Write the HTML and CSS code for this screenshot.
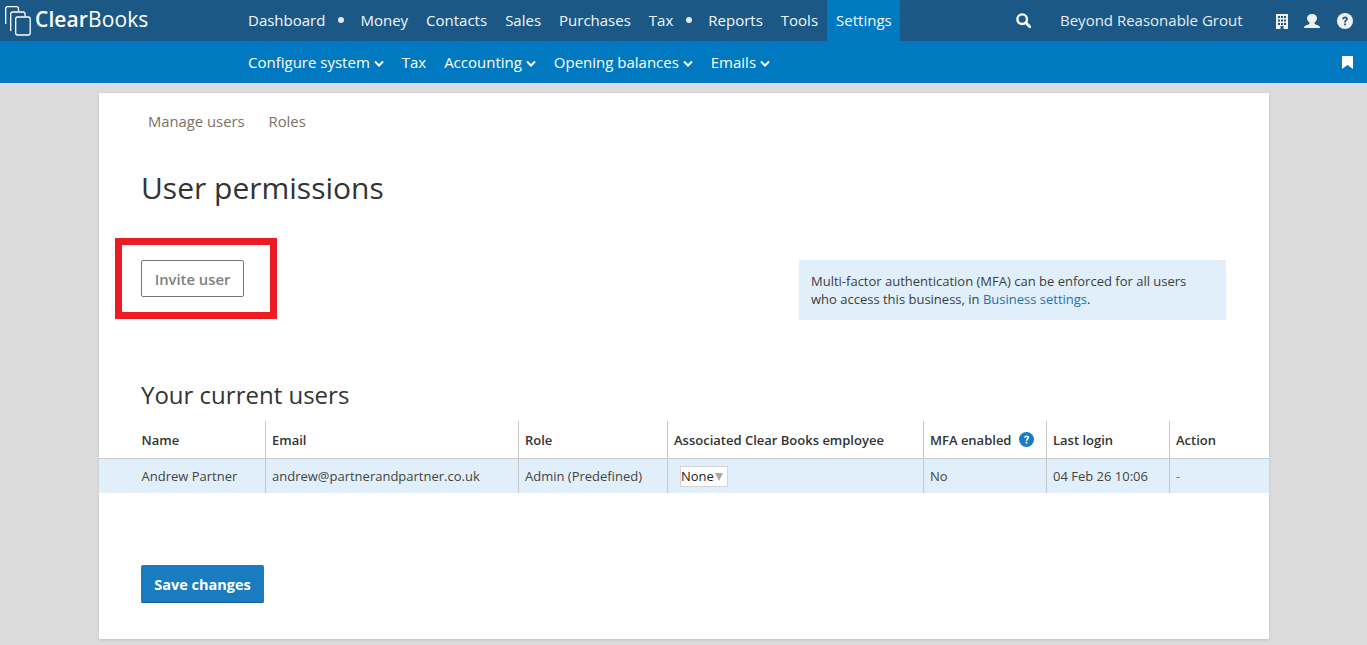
FILE: index.html
```html
<!DOCTYPE html>
<html lang="en">
<head>
<meta charset="utf-8">
<title>User permissions</title>
<link rel="stylesheet" href="styles.css">
</head>
<body>
<header class="topbar">
  <a class="logo">
    <svg class="logo-icon" width="26" height="30" viewBox="0 0 26 30" fill="none" stroke="#fff" stroke-width="1.300">
      <path d="M13.500 5.500V2.700a2 2 0 0 0-2-2H2.700a2 2 0 0 0-2 2V18"/>
      <path d="M20 10.500V8a2 2 0 0 0-2-2H7.700a2 2 0 0 0-2 2V25"/>
      <rect x="10.700" y="11" width="14.500" height="18" rx="2" fill="#1b5885"/>
    </svg>
    <span class="logo-text"><b>Clear</b>Books</span>
  </a>
  <nav class="mainnav">
    <a>Dashboard</a><i class="dot"></i><a>Money</a><a>Contacts</a><a>Sales</a><a>Purchases</a><a>Tax</a><i class="dot"></i><a>Reports</a><a>Tools</a><a class="active">Settings</a>
  </nav>
  <div class="topright">
    <svg class="ico-search" width="15" height="15" viewBox="0 0 15 15" fill="none" stroke="#fff"><circle cx="6.200" cy="6.200" r="4.800" stroke-width="2.400"/><path d="M9.800 9.800l4 4" stroke-width="2.800" stroke-linecap="round"/></svg>
    <span class="company">Beyond Reasonable Grout</span>
    <svg class="ico-building" width="12" height="15" viewBox="0 0 12 15"><path fill="#f0f0f0" fill-rule="evenodd" d="M0 0h12v15H7.500v-3h-3v3H0zM2 2v2h2V2zm3 0v2h2V2zm3 0v2h2V2zM2 5.500v2h2v-2zm3 0v2h2v-2zm3 0v2h2v-2zM2 9v2h2V9zm6 0v2h2V9zM5 9v2h2V9z"/></svg>
    <svg class="ico-user" width="16" height="14" viewBox="0 0 16 14"><path fill="#f0f0f0" d="M8 0c3 0 5 1.900 5 4.300 0 1.800-1.100 3.300-2.500 4.100v1c0 .6 1 1 2.700 1.700 1.500.5 2.800 1 2.800 2.900H0c0-1.900 1.300-2.400 2.800-2.900 1.700-.7 2.700-1.100 2.700-1.700v-1C4.100 7.600 3 6.100 3 4.300 3 1.900 5 0 8 0z"/></svg>
    <svg class="ico-help" width="16" height="16" viewBox="0 0 16 16"><circle cx="8" cy="8" r="8" fill="#f0f0f0"/><path d="M5.200 6.200c0-1.600 1.200-2.600 2.900-2.600s2.800 1 2.800 2.300c0 1.900-2.100 1.900-2.100 3.500H7.100c0-2.300 1.900-2.400 1.900-3.400 0-.5-.4-.8-1-.8-.6 0-1 .4-1.100 1z" fill="#1b5885"/><rect x="7.100" y="10.500" width="1.800" height="1.800" fill="#1b5885"/></svg>
  </div>
</header>
<div class="subbar">
  <nav class="subnav">
    <a>Configure system <svg class="chev" width="10" height="7" viewBox="0 0 10 7"><path d="M1 1.500l4 4 4-4" fill="none" stroke="#fff" stroke-width="2"/></svg></a>
    <a>Tax</a>
    <a>Accounting <svg class="chev" width="10" height="7" viewBox="0 0 10 7"><path d="M1 1.500l4 4 4-4" fill="none" stroke="#fff" stroke-width="2"/></svg></a>
    <a>Opening balances <svg class="chev" width="10" height="7" viewBox="0 0 10 7"><path d="M1 1.500l4 4 4-4" fill="none" stroke="#fff" stroke-width="2"/></svg></a>
    <a>Emails <svg class="chev" width="10" height="7" viewBox="0 0 10 7"><path d="M1 1.500l4 4 4-4" fill="none" stroke="#fff" stroke-width="2"/></svg></a>
  </nav>
  <svg class="ico-bookmark" width="11" height="13" viewBox="0 0 11 13"><path fill="#fff" d="M0 0h11v13L5.500 9 0 13z"/></svg>
</div>
<main class="card">
  <div class="tabs"><a>Manage users</a><a>Roles</a></div>
  <h1>User permissions</h1>
  <div class="actions">
    <button class="btn-outline" type="button">Invite user</button>
    <div class="notice">Multi-factor authentication (MFA) can be enforced for all users who access this business, in <a>Business settings</a>.</div>
  </div>
  <h2>Your current users</h2>
  <div class="table">
    <div class="row head">
      <div class="cell first">Name</div><div class="cell">Email</div><div class="cell">Role</div><div class="cell">Associated Clear Books employee</div>
      <div class="cell">MFA enabled <svg class="q" width="15" height="15" viewBox="0 0 16 16"><circle cx="8" cy="8" r="8" fill="#1a7cc0"/><path d="M5.200 6.200c0-1.600 1.200-2.600 2.900-2.600s2.800 1 2.800 2.300c0 1.900-2.100 1.900-2.100 3.500H7.100c0-2.300 1.900-2.400 1.900-3.400 0-.5-.4-.8-1-.8-.6 0-1 .4-1.100 1z" fill="#fff"/><rect x="7.100" y="10.500" width="1.800" height="1.800" fill="#fff"/></svg></div>
      <div class="cell">Last login</div><div class="cell">Action</div>
    </div>
    <div class="row body">
      <div class="cell first">Andrew Partner</div><div class="cell">andrew@partnerandpartner.co.uk</div><div class="cell">Admin (Predefined)</div>
      <div class="cell"><span class="select">None<i class="arrow"></i></span></div>
      <div class="cell">No</div><div class="cell">04 Feb 26 10:06</div><div class="cell muted">-</div>
    </div>
  </div>
  <button class="btn-primary" type="button">Save changes</button>
</main>
<div class="highlight"></div>
</body>
</html>
```
FILE: styles.css
```css
* { box-sizing: border-box; }
html, body { margin: 0; height: 645px; overflow: hidden; }
body { background: #dcdcdc; font-family: "Open Sans", sans-serif; color: #3a3a3a; font-size: 13px; }
a { text-decoration: none; }

.topbar { height: 41px; background: #1b5885; display: flex; align-items: stretch; color: #f4f7fa; position: relative; }
.logo { width: 248px; display: flex; align-items: flex-start; flex: none; color: #fff; }
.logo-icon { margin: 6px 0 0 5px; flex: none; }
.logo-text { font-size: 21px; line-height: 41px; margin-left: 4px; margin-top: -1px; letter-spacing: 0.1px; }
.logo-text b { font-weight: 600; }
.mainnav { display: flex; align-items: stretch; font-size: 15px; }
.mainnav a { display: flex; align-items: center; margin-right: 18px; padding-bottom: 1px; }
.mainnav a.active { background: #0079c1; margin-left: -9px; margin-right: 0; padding: 0 8px 1px 9px; }
.dot { width: 6px; height: 6px; border-radius: 50%; background: #e8e8e8; align-self: center; margin: -2px 16px 0 -5px; }
.topright { position: absolute; left: 1016px; top: 0; height: 41px; display: flex; align-items: center; }
.ico-search { margin-right: 29px; }
.company { font-size: 15px; margin-right: 33px; padding-bottom: 1px; color: #e6edf2; }
.ico-building { margin: 1px 16px 0 0; }
.ico-user { margin: 1px 17px 0 0; }

.subbar { height: 42px; background: #0079c1; display: flex; align-items: center; padding-left: 248px; position: relative; }
.subnav { display: flex; font-size: 15px; color: #fff; }
.subnav a { margin-right: 18px; display: flex; align-items: center; white-space: pre; }
.chev { margin-top: 3px; }
.ico-bookmark { position: absolute; left: 1342px; top: 15px; }

.card { margin: 10px 0 0 99px; width: 1170px; height: 546px; background: #fff; box-shadow: 0 1px 3px rgba(0,0,0,.12); padding-top: 18px; }
.tabs { display: flex; gap: 24px; padding-left: 49px; font-size: 14.800px; color: #7d7066; line-height: 20px; }
h1 { margin: 37px 0 0 42px; font-weight: 400; font-size: 30px; line-height: 40px; color: #333; }
.actions { display: flex; justify-content: space-between; margin: 0; padding: 0 43px 0 42px; height: 0; }
.btn-outline { margin-top: 52px; width: 103px; height: 37px; border: 1px solid #777; border-radius: 2px; background: #fff; color: #808080; font: 600 14.800px "Open Sans", sans-serif; padding: 0; }
.notice { margin-top: 52px; width: 427px; height: 60px; background: #e0eff9; padding: 12px 12px; font-size: 13px; line-height: 18px; color: #3d3d3d; }
.notice a { color: #1a72b5; }
h2 { margin: 171px 0 0 42px; font-weight: 400; font-size: 24px; line-height: 32px; color: #333; }
.table { margin-top: 10px; }
.row { display: grid; grid-template-columns: 167px 253px 149px 256px 123px 123px 99px; }
.row.head { height: 38px; border-bottom: 1px solid #c8cdd1; font-weight: 600; font-size: 13px; color: #333; }
.row.body { height: 34px; background: #e0eff9; font-size: 13px; color: #444; }
.cell { border-right: 1px solid #c8c8c8; padding-left: 6px; display: flex; align-items: center; white-space: pre; }
.cell:last-child { border-right: 0; }
.cell.first { padding-left: 42.500px; }
.cell.muted { color: #777; }
.q { margin-left: 4px; }
.select { margin-left: 6px; width: 48px; height: 21px; background: #fff; border: 1px solid #d5d5d5; display: flex; align-items: center; color: #222; line-height: 19px; }
.arrow { width: 0; height: 0; margin: 1px 0 0 1px; border-left: 4px solid transparent; border-right: 4px solid transparent; border-top: 8px solid #a8a8a8; }
.btn-primary { display: block; margin: 72px 0 0 42px; width: 123px; height: 38px; background: #1a7cc0; border: 0; border-bottom: 1px solid #155f94; border-radius: 2px; color: #fff; font: 700 14.500px "Open Sans", sans-serif; padding: 1px 0 0; }
.highlight { position: absolute; left: 115px; top: 238px; width: 162px; height: 81px; border: 7px solid #ec1c24; }
```
